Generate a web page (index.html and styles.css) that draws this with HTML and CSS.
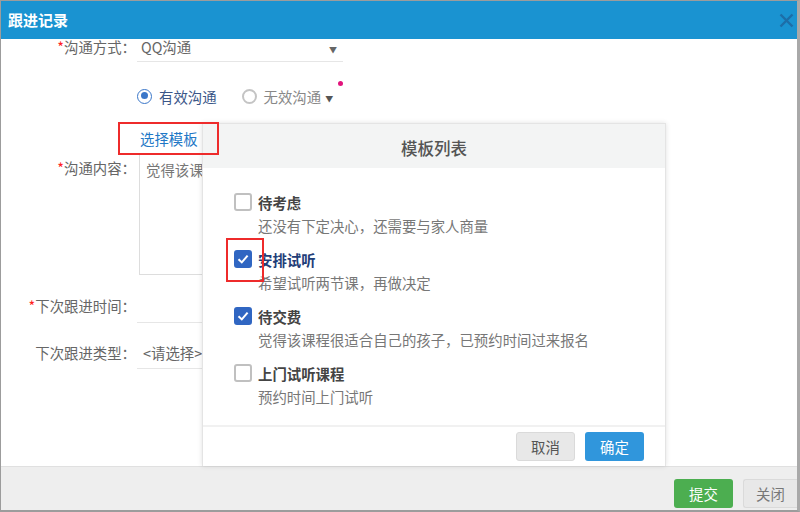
FILE: index.html
```html
<!DOCTYPE html>
<html>
<head>
<meta charset="utf-8">
<link rel="stylesheet" href="styles.css">
</head>
<body>
<div class="dialog">
  <div class="hd">
    <h1>跟进记录</h1>
    <svg class="close" width="15" height="15" viewBox="0 0 15 15"><path d="M1.5 1.5 L13.5 13.5 M13.5 1.5 L1.5 13.5" stroke="#1d6ea8" stroke-width="2.4" fill="none"/></svg>
  </div>
  <div class="bd">
    <div class="row r1">
      <div class="lbl"><i>*</i>沟通方式：</div>
      <div class="field sel"><span>QQ沟通</span><span class="arr">▼</span></div>
    </div>
    <div class="row r2">
      <div class="radio on"><span class="dot"></span>有效沟通</div>
      <div class="radio"><span class="dot"></span>无效沟通<span class="caret">▼</span><span class="badge"></span></div>
    </div>
    <div class="row r3">
      <span class="mark"><a class="link">选择模板</a></span>
    </div>
    <div class="row r4">
      <div class="lbl"><i>*</i>沟通内容：</div>
      <div class="ta">觉得该课程很适合自己的孩子，已预约时间过来报名</div>
    </div>
    <div class="row r5">
      <div class="lbl"><i>*</i>下次跟进时间：</div>
      <div class="field"></div>
    </div>
    <div class="row r6">
      <div class="lbl">下次跟进类型：</div>
      <div class="field"><span class="ph">&lt;请选择&gt;</span></div>
    </div>

    <div class="pop">
      <div class="pop-hd">模板列表</div>
      <div class="pop-bd">
        <div class="item">
          <div class="tt"><span class="cb"></span><b>待考虑</b></div>
          <div class="desc">还没有下定决心，还需要与家人商量</div>
        </div>
        <div class="item">
          <div class="tt"><span class="cbwrap"><span class="cb on"><svg width="14" height="14" viewBox="0 0 14 14"><path d="M2.5 7.2 L5.8 10.4 L11.6 3.6" stroke="#fff" stroke-width="2" fill="none"/></svg></span></span><b class="act">安排试听</b></div>
          <div class="desc">希望试听两节课，再做决定</div>
        </div>
        <div class="item">
          <div class="tt"><span class="cb on"><svg width="14" height="14" viewBox="0 0 14 14"><path d="M2.5 7.2 L5.8 10.4 L11.6 3.6" stroke="#fff" stroke-width="2" fill="none"/></svg></span><b>待交费</b></div>
          <div class="desc">觉得该课程很适合自己的孩子，已预约时间过来报名</div>
        </div>
        <div class="item">
          <div class="tt"><span class="cb"></span><b>上门试听课程</b></div>
          <div class="desc">预约时间上门试听</div>
        </div>
      </div>
      <div class="pop-ft">
        <span class="btn gray">取消</span>
        <span class="btn blue">确定</span>
      </div>
    </div>
  </div>
  <div class="ft">
    <span class="btn green">提交</span>
    <span class="btn gray close-btn">关闭</span>
  </div>
</div>
</body>
</html>
```

FILE: styles.css
```css
* { box-sizing: border-box; margin: 0; padding: 0; }
body {
  margin: 0;
  font-family: "Noto Sans CJK SC", "Liberation Sans", sans-serif;
  font-size: 14.4px;
  color: #666;
  background: #fff;
}
.dialog {
  width: 800px;
  height: 512px;
  border: 1px solid #9c9c9c;
  border-right: 3px solid #a9a9a9;
  border-bottom-width: 2px;
  display: flex;
  flex-direction: column;
  position: relative;
  overflow: hidden;
  background: #fff;
}
.hd {
  height: 38px;
  flex: none;
  background: #1a93d1;
  display: flex;
  align-items: center;
  justify-content: space-between;
  padding: 0 3px 0 7px;
}
.hd h1 {
  font-size: 15px;
  font-weight: bold;
  color: #fff;
  line-height: 20px;
}
.close { display: block; }
.bd {
  flex: 1;
  position: relative;
}
.row { display: flex; }
.lbl {
  width: 135px;
  text-align: right;
  line-height: 16px;
  color: #666;
  white-space: nowrap;
  flex: none;
}
.lbl i { font-style: normal; color: #f22; }
.field {
  margin-left: 1px;
  width: 206px;
  border-bottom: 1px solid #e6e6e6;
  display: flex;
  align-items: center;
  justify-content: space-between;
}
.r1 { height: 23px; }
.sel { align-items: flex-start; padding-left: 4px; padding-right: 6px; line-height: 16px; }
.arr { font-size: 8px; color: #666; padding-top: 3px; }

.r2 {
  margin-top: 23px;
  height: 22px;
  align-items: center;
  padding-left: 136px;
}
.radio {
  display: flex;
  align-items: center;
  color: #888;
  position: relative;
  height: 22px;
}
.radio .dot {
  width: 15px;
  height: 15px;
  border-radius: 50%;
  border: 2px solid #c4c4c4;
  margin-right: 7px;
  position: relative;
}
.radio.on { color: #3a5688; margin-right: 25px; }
.radio.on .dot { border: 1.5px solid #3b77c9; }
.radio.on .dot::after {
  content: "";
  position: absolute;
  left: 2.5px;
  top: 2.5px;
  width: 7px;
  height: 7px;
  border-radius: 50%;
  background: #3b77c9;
}
.caret { font-size: 8px; color: #555; margin-left: 4px; padding-top: 5px; }
.badge {
  position: absolute;
  right: -10px;
  top: -4px;
  width: 5px;
  height: 5px;
  border-radius: 50%;
  background: #e2137c;
}

.r3 {
  margin-top: 15px;
  padding-left: 117px;
  position: relative;
  z-index: 2;
}
.mark {
  display: flex;
  align-items: center;
  width: 101px;
  height: 33px;
  border: 2px solid #ee2b2b;
  padding-left: 20px;
}
.link { color: #1f78c6; line-height: 16px; }

.r4 { height: 121px; margin-top: -1px; }
.r4 .lbl { padding-top: 6px; }
.ta {
  margin-left: 3px;
  width: 360px;
  height: 121px;
  border: 1px solid #ddd;
  padding: 7px 6px;
  white-space: nowrap;
  overflow: hidden;
  line-height: 16px;
  color: #777;
}
.r5 { margin-top: 15px; height: 33px; }
.r5 .lbl { padding-top: 8px; }
.r6 { margin-top: 15px; height: 31px; }
.r6 .lbl { padding-top: 7px; }
.ph { padding-left: 6px; line-height: 16px; align-self: flex-start; margin-top: 7px; color: #666; }

.pop {
  position: absolute;
  left: 201px;
  top: 84px;
  bottom: 0;
  width: 464px;
  background: #fff;
  border: 1px solid #e4e4e4;
  border-bottom: none;
  box-shadow: 0 0 5px rgba(0,0,0,0.12);
  display: flex;
  flex-direction: column;
  z-index: 1;
}
.pop-hd {
  height: 44px;
  flex: none;
  background: #f3f4f4;
  display: flex;
  align-items: center;
  justify-content: center;
  padding-top: 4px;
  font-size: 16.5px;
  color: #555;
  font-weight: 500;
}
.pop-bd {
  flex: 1;
  padding: 23px 0 0 31px;
  display: flex;
  flex-direction: column;
  gap: 11px;
}
.item .tt {
  display: flex;
  align-items: center;
  height: 22px;
}
.item b { color: #444; font-weight: bold; margin-left: 6px; }
.item b.act { color: #1f3e78; }
.cb {
  width: 18px;
  height: 18px;
  border: 2px solid #c0c0c0;
  border-radius: 3px;
  background: #fff;
  flex: none;
  display: flex;
  align-items: center;
  justify-content: center;
}
.cb.on { background: #3066c2; border-color: #3066c2; }
.cbwrap {
  position: relative;
  display: flex;
}
.cbwrap::after {
  content: "";
  position: absolute;
  left: -8px;
  top: -12px;
  width: 34px;
  height: 40px;
  border: 2px solid #ee2b2b;
}
.desc {
  margin-top: 2px;
  margin-left: 24px;
  line-height: 22px;
  color: #777;
  white-space: nowrap;
}
.pop-ft {
  height: 41px;
  flex: none;
  border-top: 2px solid #f1f1f1;
  display: flex;
  justify-content: flex-end;
  align-items: center;
  gap: 10px;
  padding-right: 21px;
}
.btn {
  height: 29px;
  width: 59px;
  border-radius: 3px;
  display: flex;
  align-items: center;
  justify-content: center;
  font-size: 14.4px;
}
.gray { background: #e8e8e8; border: 1px solid #dadada; color: #555; }
.blue { background: #3096dc; color: #fff; }
.green { background: #4cae50; color: #fff; }
.ft {
  height: 44px;
  flex: none;
  background: #eeeeee;
  border-top: 1px solid #e0e0e0;
  display: flex;
  justify-content: flex-end;
  align-items: flex-end;
  padding-bottom: 2px;
  gap: 10px;
}
.close-btn { width: 54px; border-right: none; border-top-right-radius: 0; border-bottom-right-radius: 0; color: #777; }
```
